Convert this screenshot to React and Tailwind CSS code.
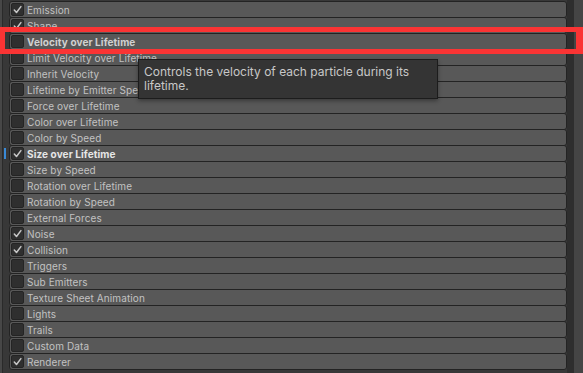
import React from 'react';

const modules = [
  { name: 'Emission', on: true },
  { name: 'Shape', on: true },
  { name: 'Velocity over Lifetime', bold: true },
  { name: 'Limit Velocity over Lifetime' },
  { name: 'Inherit Velocity' },
  { name: 'Lifetime by Emitter Speed' },
  { name: 'Force over Lifetime' },
  { name: 'Color over Lifetime' },
  { name: 'Color by Speed' },
  { name: 'Size over Lifetime', on: true, bold: true, selected: true },
  { name: 'Size by Speed' },
  { name: 'Rotation over Lifetime' },
  { name: 'Rotation by Speed' },
  { name: 'External Forces' },
  { name: 'Noise', on: true },
  { name: 'Collision', on: true },
  { name: 'Triggers' },
  { name: 'Sub Emitters' },
  { name: 'Texture Sheet Animation' },
  { name: 'Lights' },
  { name: 'Trails' },
  { name: 'Custom Data' },
  { name: 'Renderer', on: true },
];

function Check() {
  return (
    <svg width="11" height="11" viewBox="0 0 11 11" fill="none" stroke="#c8c8c8" strokeWidth="1.5" strokeLinecap="round" strokeLinejoin="round">
      <polyline points="2.3 6 4.5 8.5 8.9 2.6" />
    </svg>
  );
}

function ModuleRow({ m }) {
  return (
    <div className="relative h-[17px] -mb-px flex items-center rounded-[3px] border border-[#232323] bg-[#585858]">
      {m.selected && <div className="absolute -left-[6px] top-[2px] h-[11px] w-[2px] bg-[#3a8ad6]" />}
      <div className="ml-[1px] flex h-[13px] w-[13px] items-center justify-center rounded-[2px] border border-[#242424] bg-[#2f2f2f]">
        {m.on && <Check />}
      </div>
      <span
        className={
          'ml-[3px] text-[10px] leading-none tracking-[0.1px] ' +
          (m.bold ? 'font-bold ' : '') +
          (m.selected ? 'text-[#e6e6e6]' : m.bold ? 'text-[#d0d0d0]' : 'text-[#c2c2c2]')
        }
      >
        {m.name}
      </span>
    </div>
  );
}

export default function App() {
  return (
    <div
      className="relative flex h-[373px] w-[583px] overflow-hidden bg-[#383838]"
      style={{ fontFamily: 'Inter, "Noto Sans", sans-serif' }}
    >
      {/* left gutter */}
      <div className="flex w-[9px] shrink-0">
        <div className="w-[2px] bg-[#474747]" />
        <div className="w-px bg-[#2a2a2a]" />
      </div>

      {/* module list */}
      <div className="flex w-[558px] shrink-0 flex-col pt-[1px]">
        {modules.map((m) => (
          <ModuleRow key={m.name} m={m} />
        ))}
      </div>

      {/* scroll gutter */}
      <div className="w-[7px] shrink-0 bg-[#2e2e2e]" />
      <div className="flex-1 bg-[#454545]" />

      {/* tooltip */}
      <div className="absolute left-[138px] top-[59px] h-[40px] w-[300px] border border-[#1c1c1c] bg-[#343434] px-[5px] pt-[5px] text-[12px] leading-[14px] text-[#c8c8c8] shadow-[0_2px_4px_rgba(0,0,0,0.35)]">
        Controls the velocity of each particle during its
        <br />
        lifetime.
      </div>

      {/* highlight box */}
      <div className="pointer-events-none absolute left-0 top-[27px] h-[27px] w-[583px] border-[5px] border-r-[7px] border-[#fa3434]" />
    </div>
  );
}
